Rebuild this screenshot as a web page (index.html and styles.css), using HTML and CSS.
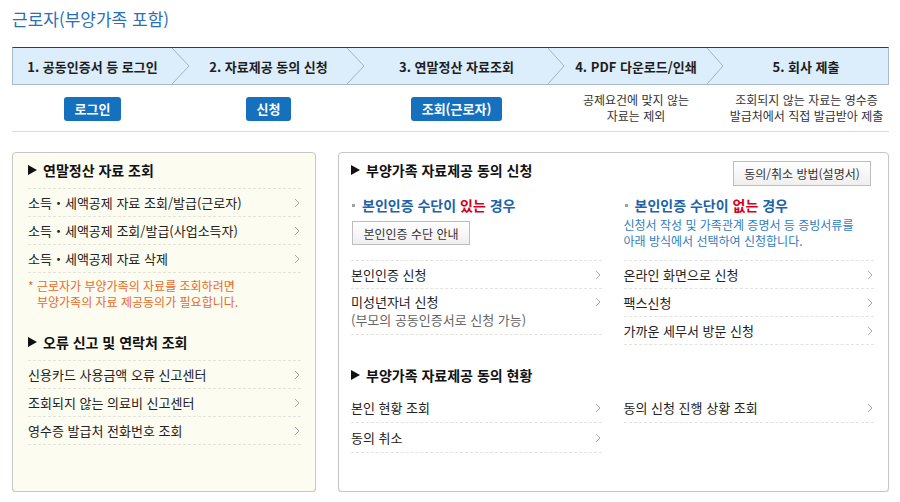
FILE: index.html
```html
<!DOCTYPE html>
<html lang="ko">
<head>
<meta charset="utf-8">
<title>근로자(부양가족 포함)</title>
<link rel="stylesheet" href="styles.css">
</head>
<body>
<div class="page">
  <h1 class="title">근로자(부양가족 포함)</h1>

  <div class="steps">
    <div class="step">1. 공동인증서 등 로그인</div>
    <span class="chev"><svg viewBox="0 0 18 36" preserveAspectRatio="none"><polyline points="0,0 17,18 0,36"/></svg></span>
    <div class="step">2. 자료제공 동의 신청</div>
    <span class="chev"><svg viewBox="0 0 18 36" preserveAspectRatio="none"><polyline points="0,0 17,18 0,36"/></svg></span>
    <div class="step">3. 연말정산 자료조회</div>
    <span class="chev"><svg viewBox="0 0 17 36" preserveAspectRatio="none"><polyline points="0,0 16,18 0,36"/></svg></span>
    <div class="step">4. PDF 다운로드/인쇄</div>
    <span class="chev"><svg viewBox="0 0 17 36" preserveAspectRatio="none"><polyline points="0,0 16,18 0,36"/></svg></span>
    <div class="step">5. 회사 제출</div>
  </div>

  <div class="subrow">
    <div class="cell"><a class="btn-blue">로그인</a></div>
    <div></div>
    <div class="cell"><a class="btn-blue">신청</a></div>
    <div></div>
    <div class="cell"><a class="btn-blue">조회(근로자)</a></div>
    <div></div>
    <div class="cell note">공제요건에 맞지 않는<br>자료는 제외</div>
    <div></div>
    <div class="cell note">조회되지 않는 자료는 영수증<br>발급처에서 직접 발급받아 제출</div>
  </div>

  <div class="rule"></div>

  <div class="panels">
    <section class="panel panel-left">
      <h2 class="heading">연말정산 자료 조회</h2>
      <ul class="list">
        <li><span>소득・세액공제 자료 조회/발급(근로자)</span><svg class="arr" viewBox="0 0 6 10"><polyline points="1,1 5,5 1,9"/></svg></li>
        <li><span>소득・세액공제 조회/발급(사업소득자)</span><svg class="arr" viewBox="0 0 6 10"><polyline points="1,1 5,5 1,9"/></svg></li>
        <li><span>소득・세액공제 자료 삭제</span><svg class="arr" viewBox="0 0 6 10"><polyline points="1,1 5,5 1,9"/></svg></li>
      </ul>
      <p class="warn">* 근로자가 부양가족의 자료를 조회하려면<br><span class="indent">부양가족의 자료 제공동의가 필요합니다.</span></p>

      <h2 class="heading heading-2">오류 신고 및 연락처 조회</h2>
      <ul class="list">
        <li><span>신용카드 사용금액 오류 신고센터</span><svg class="arr" viewBox="0 0 6 10"><polyline points="1,1 5,5 1,9"/></svg></li>
        <li><span>조회되지 않는 의료비 신고센터</span><svg class="arr" viewBox="0 0 6 10"><polyline points="1,1 5,5 1,9"/></svg></li>
        <li><span>영수증 발급처 전화번호 조회</span><svg class="arr" viewBox="0 0 6 10"><polyline points="1,1 5,5 1,9"/></svg></li>
      </ul>
    </section>

    <section class="panel panel-right">
      <div class="rhead">
        <h2 class="heading">부양가족 자료제공 동의 신청</h2>
        <a class="btn-gray btn-guide">동의/취소 방법(설명서)</a>
      </div>

      <div class="cols">
        <div class="coltop">
          <h3 class="subhead">본인인증 수단이 <em>있는</em> 경우</h3>
          <a class="btn-gray btn-auth">본인인증 수단 안내</a>
        </div>
        <div class="coltop">
          <h3 class="subhead">본인인증 수단이 <em>없는</em> 경우</h3>
          <p class="desc">신청서 작성 및 가족관계 증명서 등 증빙서류를<br>아래 방식에서 선택하여 신청합니다.</p>
        </div>
        <ul class="list list-r">
          <li><span>본인인증 신청</span><svg class="arr" viewBox="0 0 6 10"><polyline points="1,1 5,5 1,9"/></svg></li>
          <li class="multi"><span class="lbl">미성년자녀 신청<span class="sub">(부모의 공동인증서로 신청 가능)</span></span><span class="arrbox"><svg class="arr" viewBox="0 0 6 10"><polyline points="1,1 5,5 1,9"/></svg></span></li>
        </ul>
        <ul class="list list-r">
          <li><span>온라인 화면으로 신청</span><svg class="arr" viewBox="0 0 6 10"><polyline points="1,1 5,5 1,9"/></svg></li>
          <li><span>팩스신청</span><svg class="arr" viewBox="0 0 6 10"><polyline points="1,1 5,5 1,9"/></svg></li>
          <li><span>가까운 세무서 방문 신청</span><svg class="arr" viewBox="0 0 6 10"><polyline points="1,1 5,5 1,9"/></svg></li>
        </ul>
      </div>

      <h2 class="heading heading-r2">부양가족 자료제공 동의 현황</h2>
      <div class="cols cols-2">
        <ul class="list list-s">
          <li><span>본인 현황 조회</span><svg class="arr" viewBox="0 0 6 10"><polyline points="1,1 5,5 1,9"/></svg></li>
          <li><span>동의 취소</span><svg class="arr" viewBox="0 0 6 10"><polyline points="1,1 5,5 1,9"/></svg></li>
        </ul>
        <ul class="list list-s">
          <li><span>동의 신청 진행 상황 조회</span><svg class="arr" viewBox="0 0 6 10"><polyline points="1,1 5,5 1,9"/></svg></li>
        </ul>
      </div>
    </section>
  </div>
</div>
</body>
</html>
```
FILE: styles.css
```css
* { box-sizing: border-box; }

body {
  margin: 0;
  background: #fff;
  color: #222;
  font-family: "Noto Sans CJK KR", "Noto Sans", sans-serif;
}

.page {
  width: 901px;
  padding: 0 12px;
}

.title {
  margin: 8px 0 0;
  font-size: 17px;
  line-height: 21px;
  font-weight: normal;
  color: #2b6fb6;
}

.steps {
  margin-top: 18px;
  display: grid;
  grid-template-columns: 159px 18px 157px 18px 183px 17px 142px 17px 1fr;
  height: 38px;
  border: 1px solid #a9bccd;
  border-top: 1px solid #3a3a3a;
  background: #dcedfb;
}

.step {
  display: flex;
  align-items: center;
  justify-content: center;
  font-size: 13px;
  font-weight: bold;
  color: #1e1e1e;
  white-space: nowrap;
}

.chev svg {
  display: block;
  width: 100%;
  height: 100%;
  fill: none;
  stroke: #9fb4c7;
  stroke-width: 1;
}

.subrow {
  margin-top: 7px;
  padding-left: 1px;
  display: grid;
  grid-template-columns: 159px 18px 157px 18px 183px 17px 142px 17px 1fr;
  height: 32px;
  align-items: center;
}

.cell {
  text-align: center;
}

.btn-blue {
  display: inline-block;
  background: #1570bd;
  color: #fff;
  font-size: 13px;
  font-weight: bold;
  line-height: 24px;
  padding: 0 11px;
  border-radius: 3px;
}

.note {
  font-size: 12px;
  line-height: 16px;
  color: #333;
  white-space: nowrap;
}

.rule {
  margin-top: 7px;
  border-top: 1px solid #dadada;
}

.panels {
  margin-top: 20px;
  display: flex;
  gap: 22px;
}

.panel {
  height: 340px;
  border: 1px solid #c6c6c6;
  border-radius: 4px;
  box-shadow: 0 1px 1px rgba(0, 0, 0, 0.12);
}

.panel-left {
  width: 304px;
  background: #fdfcf0;
  padding: 7px 14px 0 15px;
}

.panel-right {
  flex: 1;
  background: #fff;
  padding: 7px 14px 0 12px;
}

.heading {
  margin: 0 0 8px;
  display: flex;
  align-items: center;
  gap: 6px;
  font-size: 14px;
  line-height: 20px;
  font-weight: bold;
  color: #111;
}

.heading::before {
  content: "";
  width: 0;
  height: 0;
  border-left: 9px solid #111;
  border-top: 5.5px solid transparent;
  border-bottom: 5.5px solid transparent;
}

.heading-2 {
  margin-top: 22px;
}

.list {
  list-style: none;
  margin: 0;
  padding: 0;
  border-top: 1px dashed #e3e3dd;
}

.list li {
  height: 28px;
  display: flex;
  align-items: center;
  justify-content: space-between;
  border-bottom: 1px dashed #e3e3dd;
  font-size: 13px;
  line-height: 18px;
  color: #222;
  white-space: nowrap;
}

.arr {
  width: 6px;
  height: 10px;
  margin-right: 1px;
  flex: none;
  fill: none;
  stroke: #a8a8a8;
  stroke-width: 1;
}

.warn {
  margin: 5px 0 0;
  font-size: 12px;
  line-height: 16px;
  color: #e8692b;
}

.warn .indent {
  padding-left: 9px;
}

.rhead {
  display: flex;
  justify-content: space-between;
  align-items: flex-start;
}

.btn-gray {
  display: inline-flex;
  align-items: center;
  justify-content: center;
  border: 1px solid #bdbdbd;
  background: linear-gradient(#ffffff, #efefef);
  font-size: 12px;
  color: #333;
  white-space: nowrap;
}

.btn-guide {
  margin: 1px 3px 0 0;
  width: 138px;
  height: 25px;
}

.cols {
  margin-top: 8px;
  display: grid;
  grid-template-columns: 1fr 1fr;
  column-gap: 22px;
}

.subhead {
  margin: 0;
  display: flex;
  align-items: center;
  font-size: 14px;
  line-height: 18px;
  font-weight: bold;
  color: #1d63a8;
  white-space: pre;
}

.subhead::before {
  content: "";
  width: 3px;
  height: 3px;
  margin: 0 7px 0 1px;
  background: #a0a0a0;
}

.subhead em {
  font-style: normal;
  color: #d3001e;
}

.btn-auth {
  margin-top: 7px;
  width: 118px;
  height: 24px;
  margin-left: 1px;
}

.desc {
  margin: 3px 0 0;
  font-size: 12px;
  line-height: 16px;
  color: #2f7dc0;
  white-space: nowrap;
}

.list-r {
  margin-top: 11px;
  align-self: start;
}

.list li.multi {
  height: 46px;
  align-items: flex-start;
  padding-top: 4px;
}

.lbl {
  display: flex;
  flex-direction: column;
}

.sub {
  color: #666;
}

.arrbox {
  height: 18px;
  display: flex;
  align-items: center;
}

.heading-r2 {
  margin-top: 20px;
}

.cols-2 {
  margin-top: 0;
}

.list-s {
  border-top: none;
  align-self: start;
}

.list-s li {
  height: 30px;
}
```
